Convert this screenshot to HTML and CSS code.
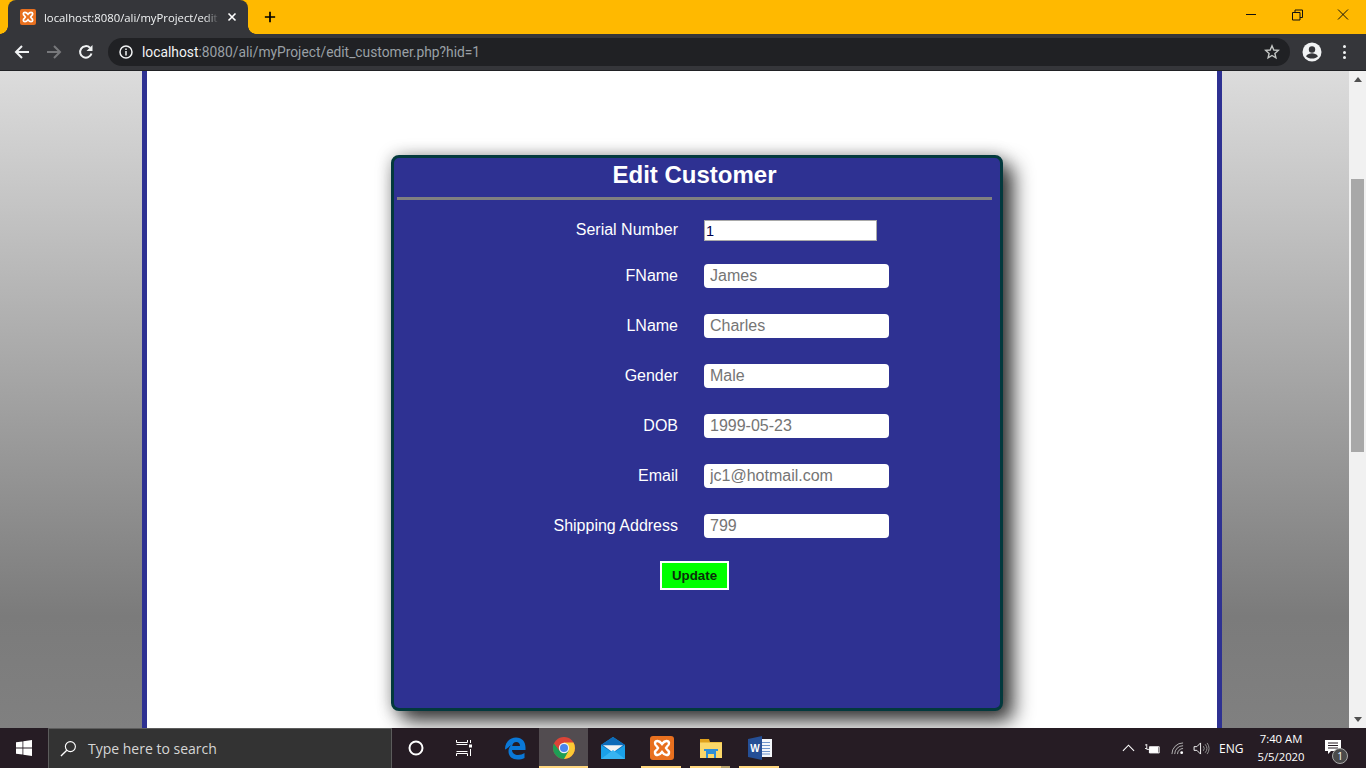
FILE: index.html
```html
<!DOCTYPE html>
<html lang="en">
<head>
<meta charset="utf-8">
<title>Edit Customer</title>
<link rel="stylesheet" href="styles.css">
</head>
<body>
<header class="chrome">
  <div class="tabstrip">
    <div class="tab">
      <svg class="favicon" viewBox="0 0 24 24"><rect width="24" height="24" rx="3" fill="#e8701f"/><path d="M12 8C13.500 6 14.500 5 16.500 5 19.500 5 20 8.500 17 10.500L16 12l1 1.500C20 15.500 19.500 19 16.500 19 14.500 19 13.500 18 12 16 10.500 18 9.500 19 7.500 19 4.500 19 4 15.500 7 13.500L8 12l-1-1.500C4 8.500 4.500 5 7.500 5 9.500 5 10.500 6 12 8z" fill="none" stroke="#fff" stroke-width="2.600"/></svg>
      <span class="tab-title">localhost:8080/ali/myProject/edit</span>
      <svg class="tab-close" viewBox="0 0 10 10"><path d="M1.500 1.500l7 7M8.500 1.500l-7 7" stroke="#fff" stroke-width="1.600"/></svg>
    </div>
    <svg class="newtab" viewBox="0 0 14 14"><path d="M7 1v12M1 7h12" stroke="#000" stroke-width="2"/></svg>
    <div class="winctl">
      <svg viewBox="0 0 46 34"><path d="M18 14.500h10" stroke="#111" stroke-width="1"/></svg>
      <svg viewBox="0 0 46 34"><path d="M18.500 12.500h7.500v7.500h-7.500zM21 12.500v-2.500h7.500v7.500h-2.500" fill="none" stroke="#111" stroke-width="1"/></svg>
      <svg viewBox="0 0 46 34"><path d="M18 9.500l10 10M28 9.500l-10 10" stroke="#111" stroke-width="1"/></svg>
    </div>
  </div>
  <div class="toolbar">
    <svg class="tool" viewBox="0 0 16 16"><path d="M15 8H2M8 2L2 8l6 6" fill="none" stroke="#f1f3f4" stroke-width="2"/></svg>
    <svg class="tool" viewBox="0 0 16 16"><path d="M1 8h13M8 2l6 6-6 6" fill="none" stroke="#77787b" stroke-width="2"/></svg>
    <svg class="tool" viewBox="0 0 16 16"><path d="M13.500 9.500A5.800 5.800 0 1 1 12 3.800" fill="none" stroke="#f1f3f4" stroke-width="2"/><path d="M14.500 1v6h-6z" fill="#f1f3f4"/></svg>
    <div class="omnibox">
      <svg class="info" viewBox="0 0 14 14"><circle cx="7" cy="7" r="6" fill="none" stroke="#f1f3f4" stroke-width="1.500"/><path d="M7 6v4.500M7 3.500v1.500" stroke="#f1f3f4" stroke-width="1.500"/></svg>
      <span class="url"><b>localhost</b>:8080/ali/myProject/edit_customer.php?hid=1</span>
      <svg class="star" viewBox="0 0 16 16"><path d="M8 1.800l1.800 4.200 4.500.4-3.400 3 1 4.400L8 11.500l-3.900 2.300 1-4.400-3.400-3 4.500-.4z" fill="none" stroke="#c4c7c5" stroke-width="1.400"/></svg>
    </div>
    <svg class="avatar" viewBox="0 0 20 20"><circle cx="10" cy="10" r="9.500" fill="#f1f3f4"/><circle cx="10" cy="7.500" r="3.200" fill="#35363a"/><path d="M4 14.200c1.500-2.200 3.800-3 6-3s4.500.8 6 3c-1.400 1.600-3.600 2.300-6 2.300s-4.600-.7-6-2.300z" fill="#35363a"/></svg>
    <div class="dots"><i></i><i></i><i></i></div>
  </div>
</header>

<div class="viewport">
  <main class="page">
    <div class="wrapper">
      <section class="panel">
        <h1 class="panel-title">Edit Customer</h1>
        <hr class="rule">
        <form class="form">
          <div class="row row-serial"><label class="lbl">Serial Number</label><input class="serial" value="1"></div>
          <div class="row"><label class="lbl">FName</label><input class="field" placeholder="James"></div>
          <div class="row"><label class="lbl">LName</label><input class="field" placeholder="Charles"></div>
          <div class="row"><label class="lbl">Gender</label><input class="field" placeholder="Male"></div>
          <div class="row"><label class="lbl">DOB</label><input class="field" placeholder="1999-05-23"></div>
          <div class="row"><label class="lbl">Email</label><input class="field" placeholder="jc1@hotmail.com"></div>
          <div class="row"><label class="lbl">Shipping Address</label><input class="field" placeholder="799"></div>
          <div class="actions"><button class="update" type="button">Update</button></div>
        </form>
      </section>
    </div>
  </main>
  <aside class="scrollbar">
    <div class="sb-arrow"><svg viewBox="0 0 8 5"><path d="M4 0l4 5H0z" fill="#505050"/></svg></div>
    <div class="sb-track"><div class="sb-thumb"></div></div>
    <div class="sb-arrow"><svg viewBox="0 0 8 5"><path d="M0 0h8L4 5z" fill="#505050"/></svg></div>
  </aside>
</div>

<footer class="taskbar">
  <div class="start"><svg viewBox="0 0 16 16"><path d="M0 2.300l6.500-.9v6.200H0zM7.300 1.300L16 0v7.600H7.300zM0 8.400h6.500v6.200L0 13.700zM7.300 8.400H16V16l-8.700-1.300z" fill="#fff"/></svg></div>
  <div class="search">
    <svg viewBox="0 0 18 18"><circle cx="11" cy="7" r="5.300" fill="none" stroke="#fff" stroke-width="1.200"/><path d="M7.200 10.800L1 17" stroke="#fff" stroke-width="1.400"/></svg>
    <span>Type here to search</span>
  </div>
  <div class="tb-btn"><svg class="ic-cortana" viewBox="0 0 16 16"><circle cx="8" cy="8" r="6.500" fill="none" stroke="#fff" stroke-width="2"/></svg></div>
  <div class="tb-btn"><svg class="ic-task" viewBox="0 0 16 16"><path d="M.5 0v2.500h11V0M.5 16v-2.500h11V16M.5 4.500h11M.5 11.500h11M14.500 0v3M14.500 9v7" fill="none" stroke="#fff" stroke-width="1"/><rect x="13" y="4.500" width="3" height="3" fill="#fff"/></svg></div>
  <div class="tb-apps">
    <div class="app"><svg viewBox="0 0 24 24"><path d="M2 13C2 6 7 1.500 13 1.500c6 0 9.500 4.300 9.500 10v2.500H9c.2 3.500 3 5 6 5 2.500 0 4.800-.8 6.500-2v5c-2 1.200-4.500 1.500-7 1.500-5 0-9-3-9-8 0-3 1.300-5.500 3.500-7-1.800 1.200-4 3-6.500 5zM9.200 10h7.800c0-2.700-1.500-4-3.700-4-2.200 0-3.700 1.500-4.100 4z" fill="#0a78d7"/></svg></div>
    <div class="app app-active"><svg viewBox="0 0 24 24"><circle cx="12" cy="12" r="11" fill="#db4437"/><path d="M12 23a11 11 0 0 0 9.500-16.500H12z" fill="#fcc934"/><path d="M1.900 7.600A11 11 0 0 0 12 23l4.800-8.500-9.500-0z" fill="#1e9e55"/><circle cx="12" cy="12" r="5.200" fill="#f1f3f4"/><circle cx="12" cy="12" r="4" fill="#4a85ee"/></svg></div>
    <div class="app"><svg viewBox="0 0 24 22"><path d="M12 0l12 8v14H0V8z" fill="#1aa0e8"/><path d="M12 0l12 8-12 8L0 8z" fill="#0d6ab8"/><path d="M2 8.300h20L12 15.500z" fill="#f3f3f3"/><path d="M0 22l12-9 12 9z" fill="#37b4f2"/></svg></div>
    <div class="app app-open"><svg viewBox="0 0 24 24"><rect width="24" height="24" rx="3" fill="#e8701f"/><path d="M12 8C13.500 6 14.500 5 16.500 5 19.500 5 20 8.500 17 10.500L16 12l1 1.500C20 15.500 19.500 19 16.500 19 14.500 19 13.500 18 12 16 10.500 18 9.500 19 7.500 19 4.500 19 4 15.500 7 13.500L8 12l-1-1.500C4 8.500 4.500 5 7.500 5 9.500 5 10.500 6 12 8z" fill="none" stroke="#fff" stroke-width="2.400"/></svg></div>
    <div class="app app-open app-stack"><svg class="ic-folder" viewBox="0 0 22 19"><path d="M0 0h9l1 3h12v16H0z" fill="#dfa11c"/><path d="M0 3.500h22V19H0z" fill="#fbd869"/><path d="M4 10h14v2h-2v7h-2v-4H8v4H6v-7H4z" fill="#2f8fd6"/></svg></div>
    <div class="app app-open"><svg viewBox="0 0 24 24"><path d="M9 3h15v18H9z" fill="#f4f7fb"/><path d="M14 6.500h8M14 9.500h8M14 12.500h8M14 15.500h8M14 18h8" stroke="#6f95cc" stroke-width="1"/><path d="M0 3l14-3v24L0 21z" fill="#254f96"/><text x="7" y="16" class="word-w">W</text></svg></div>
  </div>
  <div class="tray">
    <svg class="t-chev" viewBox="0 0 14 8"><path d="M1 7l6-6 6 6" fill="none" stroke="#fff" stroke-width="1.200"/></svg>
    <svg class="t-batt" viewBox="0 0 18 12"><path d="M0 2h2M0 6h2M2 1v6h3v4M5 4h11v7H5z" fill="none" stroke="#fff" stroke-width="1"/><rect x="5" y="4" width="10" height="7" fill="#fff"/></svg>
    <svg class="t-wifi" viewBox="0 0 14 14"><path d="M1 13A12 12 0 0 1 13 1M4 13A9 9 0 0 1 13 4M7 13a6 6 0 0 1 6-6" fill="none" stroke="#bbb" stroke-width="1"/><circle cx="11.500" cy="11.500" r="1.500" fill="#fff"/></svg>
    <svg class="t-vol" viewBox="0 0 18 14"><path d="M1 5h3l4-4v12L4 9H1z" fill="none" stroke="#fff" stroke-width="1"/><path d="M11 4.500a4 4 0 0 1 0 5M13 2.500a7 7 0 0 1 0 9M15 1a9.500 9.500 0 0 1 0 12" fill="none" stroke="#999" stroke-width="1"/></svg>
    <span class="t-lang">ENG</span>
    <div class="t-clock"><span>7:40 AM</span><span>5/5/2020</span></div>
    <div class="t-notif">
      <svg viewBox="0 0 16 14"><path d="M0 0h16v11H6l-3 3v-3H0z" fill="#fff"/><path d="M3 3h10M3 5.500h10M3 8h10" stroke="#261c24" stroke-width="1"/></svg>
      <span class="badge">1</span>
    </div>
  </div>
</footer>
</body>
</html>
```
FILE: styles.css
```css
* { box-sizing: border-box; }
html, body { margin: 0; height: 100%; overflow: hidden; }
body { width: 1366px; height: 768px; display: flex; flex-direction: column; font-family: "Liberation Sans", Arial, sans-serif; background: #fff; }

/* browser chrome */
.chrome { flex: none; height: 71px; background: #35363a; border-bottom: 1px solid #202124; }
.tabstrip { height: 34px; background: #ffb900; display: flex; align-items: flex-start; padding-left: 8px; }
.tab { position: relative; width: 240px; height: 34px; background: #35363a; border-radius: 8px 8px 0 0; display: flex; align-items: center; padding: 0 11px 0 12px; gap: 8px; }
.tab::before, .tab::after { content: ""; position: absolute; bottom: 0; width: 8px; height: 8px; }
.tab::before { left: -8px; background: radial-gradient(circle at 0 0, transparent 7.5px, #35363a 8px); }
.tab::after { right: -8px; background: radial-gradient(circle at 100% 0, transparent 7.500px, #35363a 8px); }
.favicon { width: 16px; height: 16px; flex: none; }
.tab-title { flex: 1; min-width: 0; white-space: nowrap; font: 11.3px "Open Sans", sans-serif; color: #f1f3f4; -webkit-mask-image: linear-gradient(to right, #000 92%, transparent); mask-image: linear-gradient(to right, #000 92%, transparent); }
.tab-close { width: 10px; height: 10px; flex: none; }
.newtab { width: 12px; height: 12px; margin: 11px 0 0 16px; flex: none; }
.winctl { margin-left: auto; display: flex; }
.winctl svg { width: 46px; height: 34px; display: block; }
.toolbar { height: 36px; display: flex; align-items: center; padding-left: 14px; }
.tool { width: 16px; height: 16px; margin-right: 16px; flex: none; }
.omnibox { width: 1182px; height: 28px; margin-left: -2px; background: #202124; border-radius: 14px; display: flex; align-items: center; padding: 0 10px 0 11px; }
.info { width: 14px; height: 14px; flex: none; }
.url { margin-left: 9px; font: 13.8px Roboto, sans-serif; color: #9aa0a6; white-space: nowrap; }
.url b { font-weight: 400; color: #f1f3f4; }
.star { width: 16px; height: 16px; margin-left: auto; }
.avatar { width: 20px; height: 20px; margin-left: 12px; flex: none; }
.dots { margin-left: 21px; display: flex; flex-direction: column; gap: 2.5px; }
.dots i { width: 3px; height: 3px; background: #f1f3f4; border-radius: 50%; display: block; }

/* page */
.viewport { flex: none; height: 657px; display: flex; overflow: hidden; }
.page { flex: 1; padding-left: 142px; background: linear-gradient(#dcdcdc 0, #7b7b7b 83%, #808080 100%); overflow: hidden; }
.wrapper { width: 1080px; height: 100%; background: #fff; border-left: 5px solid #2e3192; border-right: 5px solid #2e3192; padding: 84px 0 0 244px; }
.panel { width: 612px; height: 556px; background: #2e3192; border: 3px solid #03393d; border-radius: 8px; box-shadow: 10px 10px 20px #333, 0 0 16px rgba(0, 0, 0, .25); padding: 0 8px 0 3px; color: #fff; }
.panel-title { margin: 0; height: 33px; font-size: 24px; line-height: 33px; font-weight: 700; text-align: center; }
.rule { margin: 6px 0 20px; height: 3px; border: 0; background: #808080; }
.form { display: flex; flex-direction: column; }
.row { display: flex; align-items: center; gap: 26px; margin-bottom: 26px; }
.row-serial { align-items: flex-start; margin-bottom: 23px; }
.row-serial .lbl { padding-top: 1px; }
.lbl { width: 281px; text-align: right; font-size: 16px; line-height: 18px; }
.serial { width: 173px; height: 21px; padding: 0 1px; border: 1px solid #a9a9a9; background: #fff; font: 14.5px "Liberation Sans", Arial, sans-serif; color: #00004d; outline: 0; }
.field { width: 185px; height: 24px; padding: 0 6px; border: 0; border-radius: 4px; background: #fff; font: 16px "Liberation Sans", Arial, sans-serif; outline: 0; }
.field::placeholder { color: #757575; opacity: 1; }
.actions { display: flex; justify-content: center; margin-top: -3px; }
.update { width: 69px; height: 29px; padding: 0; background: #00ff00; border: 2px solid #fff; color: #0a2f0a; font: 700 13.33px "Liberation Sans", Arial, sans-serif; }

/* scrollbar */
.scrollbar { flex: none; width: 17px; background: #f1f1f1; display: flex; flex-direction: column; }
.sb-arrow { flex: none; height: 17px; display: flex; align-items: center; justify-content: center; }
.sb-arrow svg { width: 8px; height: 5px; }
.sb-track { flex: 1; padding: 91px 2px 0; }
.sb-thumb { height: 273px; background: #a8a8a8; }

/* taskbar */
.taskbar { flex: none; height: 40px; background: #261c24; display: flex; align-items: stretch; color: #fff; }
.start { width: 48px; display: flex; align-items: center; justify-content: center; }
.start svg { width: 16px; height: 16px; }
.search { width: 344px; background: #333; border: 1px solid #5c5c5c; border-bottom: 0; display: flex; align-items: center; padding-left: 11px; gap: 11px; font: 14px "Open Sans", sans-serif; color: #d6d6d6; }
.search svg { width: 17px; height: 17px; flex: none; }
.tb-btn { width: 48px; display: flex; align-items: center; justify-content: center; }
.ic-cortana { width: 16px; height: 16px; }
.ic-task { width: 16px; height: 16px; }
.tb-apps { display: flex; margin-left: 2px; }
.app { position: relative; width: 49px; display: flex; align-items: center; justify-content: center; }
.app svg { width: 24px; height: 24px; }
.app .ic-folder { width: 22px; height: 19px; }
.app-active { background: #524c50; box-shadow: inset 0 -2px 0 #ffd77f; }
.app-open::after { content: ""; position: absolute; left: 4px; right: 5px; bottom: 0; height: 2px; background: #ffd77f; }
.app-stack::before { content: ""; position: absolute; right: 5px; width: 9px; bottom: 0; height: 2px; background: #b8a26a; z-index: 1; }
.word-w { font: 700 10px "Liberation Sans", sans-serif; fill: #fff; text-anchor: middle; }
.tray { margin-left: auto; margin-right: 13px; display: flex; align-items: center; font: 12px "Open Sans", sans-serif; color: #fff; }
.t-chev { width: 13px; height: 8px; margin-right: 10px; }
.t-batt { width: 16px; height: 11px; margin-right: 10px; }
.t-wifi { width: 13px; height: 13px; margin-right: 9px; }
.t-vol { width: 17px; height: 13px; margin-right: 9px; }
.t-lang { width: 26px; margin-right: 11px; }
.t-clock { width: 50px; display: flex; flex-direction: column; align-items: center; line-height: 18px; margin-right: 7px; font-size: 11.3px; }
.t-notif { position: relative; width: 40px; height: 40px; }
.t-notif svg { position: absolute; left: 12px; top: 12px; width: 16px; height: 14px; }
.badge { position: absolute; left: 19px; top: 20px; width: 16px; height: 16px; border-radius: 50%; background: #4a4a4a; border: 1px solid #aaa; font-size: 10px; line-height: 14px; text-align: center; }
```
